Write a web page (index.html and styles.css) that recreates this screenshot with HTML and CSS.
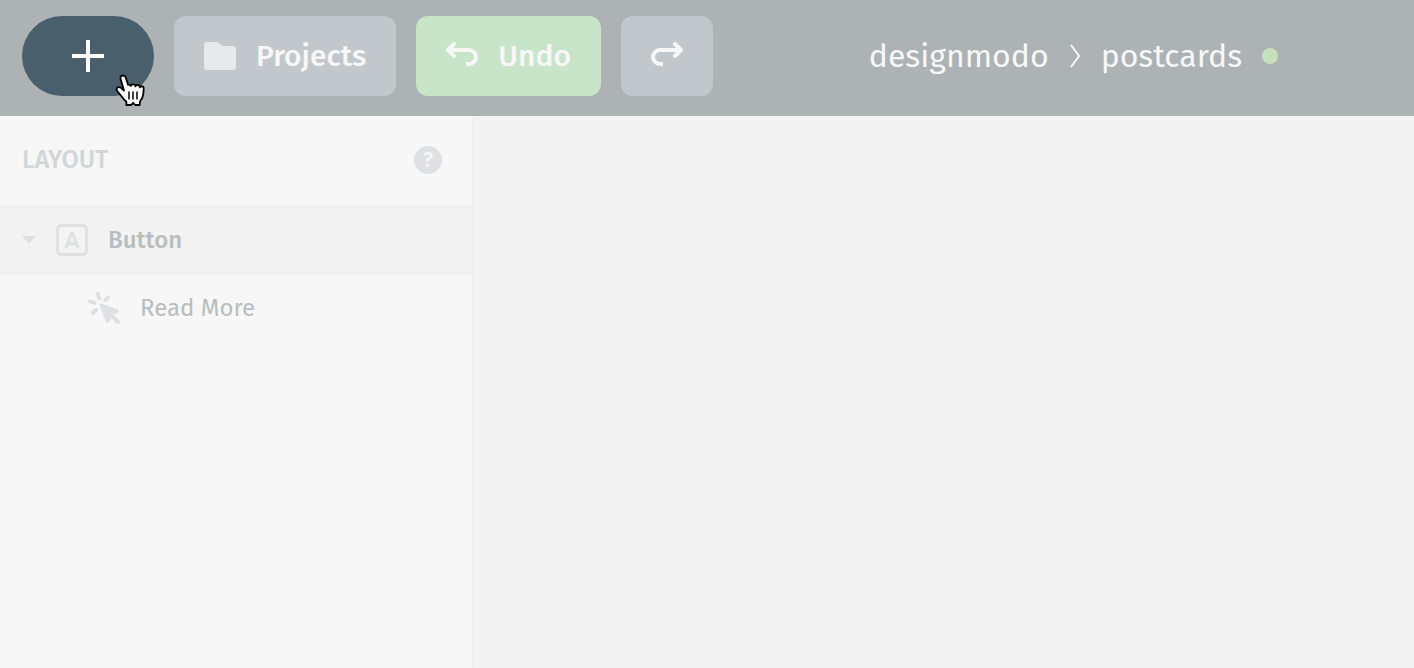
FILE: index.html
```html
<!DOCTYPE html>
<html lang="en">
  <head>
    <meta charset="UTF-8" />
    <meta name="viewport" content="width=device-width, initial-scale=1.0" />
    <title>designmodo - postcards</title>
    <link rel="stylesheet" href="styles.css">
  </head>
  <body>
    <header class="topbar">
      <button class="btn btn-add" type="button" aria-label="Add">
        <svg width="32" height="32" viewBox="0 0 32 32">
          <path d="M16 0v32M0 16h32" stroke="#fff" stroke-width="4" />
        </svg>
        <svg class="pointer" width="34" height="34" viewBox="0 0 34 34">
          <path d="M9 2.500c-1.800 0-3 1.500-2.500 3.300L10 17.500 7 14.800c-1.400-1-3.400-.8-4.200.5-.6 1-.2 2 .6 2.900l4.300 5.300c1.500 2.200 3 3.800 4.700 5.200V32h4.800l2-2.200 2 2.200h4.500l.3-3.500c2-2.500 3.200-5 3.400-8l.3-5.500c0-1.800-3-2.400-3.700-.7-.2-2.600-3.700-3.200-4.500-1-.4-2.200-4-2.600-4.800-.3-.4-1-1.700-1.500-2.700-1.200L11.700 4.500C11.300 3.200 10.300 2.500 9 2.500z" fill="#fff" stroke="#000" stroke-width="1.800" stroke-linejoin="round" />
          <path d="M15 18.500v8M19 18.500v8M23 18.500v8" stroke="#000" stroke-width="1.500" />
        </svg>
      </button>
      <button class="btn" type="button">
        <svg width="32" height="28" viewBox="0 0 32 28">
          <path d="M3 0h9c1.500 0 2.500.5 3.500 1.300L18 3.300c.6.500 1.200.7 2 .7h9a3 3 0 0 1 3 3v18a3 3 0 0 1-3 3H3a3 3 0 0 1-3-3V3a3 3 0 0 1 3-3z" fill="#e7e9eb" />
        </svg>
        Projects
      </button>
      <button class="btn btn-undo" type="button">
        <svg class="arrow" width="32" height="28" viewBox="0 0 32 28">
          <path d="M8 2 2 8l6 6" stroke-linecap="round" stroke-linejoin="round" />
          <path d="M2 8h21a7 7 0 0 1 0 14h-3" />
        </svg>
        Undo
      </button>
      <button class="btn" type="button" aria-label="Redo">
        <svg class="arrow" width="32" height="28" viewBox="0 0 32 28">
          <path d="m24 2 6 6-6 6" stroke-linecap="round" stroke-linejoin="round" />
          <path d="M30 8H9a7 7 0 0 0 0 14h3" />
        </svg>
      </button>
      <nav class="breadcrumb">
        <a href="#">designmodo</a>
        <svg width="12" height="24" viewBox="0 0 12 24">
          <path d="m2 1 8 11-8 11" fill="none" stroke="#f7f7f7" stroke-width="2" />
        </svg>
        <a href="#">postcards</a>
        <span class="status"></span>
      </nav>
    </header>

    <main class="workspace">
      <aside class="sidebar">
        <div class="sidebar-head">
          <h2>LAYOUT</h2>
          <button class="help" type="button">?</button>
        </div>
        <div class="layer layer-active">
          <svg width="14" height="8" viewBox="0 0 14 8">
            <path d="M0 0h14L7 8z" fill="#dfe0e4" />
          </svg>
          <svg width="32" height="32" viewBox="0 0 32 32" fill="none" stroke="#dfe0e4" stroke-width="3">
            <rect x="1.500" y="1.500" width="29" height="29" rx="4.500" />
            <path d="m10 24 5.200-14.500h1.600L22 24M11.500 19.500h9" />
          </svg>
          Button
        </div>
        <div class="layer layer-child">
          <svg width="32" height="32" viewBox="0 0 32 32" stroke="#dfe0e4" stroke-linecap="round" stroke-linejoin="round">
            <path d="m10 2 1.300 4.500M20 5.500l-2.500 2.500M2 9.500l4.500 1.200M8 18l-3 3" stroke-width="4" />
            <path d="m13 13 16.500 6-6.500 3.500L19.500 29.500z" fill="#dfe0e4" stroke-width="3" />
            <path d="m23 23 7 7" stroke-width="4" />
          </svg>
          Read More
        </div>
      </aside>
      <section class="canvas"></section>
    </main>
  </body>
</html>
```

FILE: styles.css
```css
* {
  box-sizing: border-box;
}
body {
  display: flex;
  flex-direction: column;
  min-height: 100vh;
  margin: 0;
  font-family: "Fira Sans", "Noto Sans", sans-serif;
  background-color: #f3f3f3;
}

/* Top bar */
.topbar {
  display: flex;
  gap: 20px;
  padding: 16px 0 20px 22px;
  background-color: #adb2b5;
}
.btn {
  position: relative;
  display: flex;
  align-items: center;
  gap: 20px;
  height: 80px;
  padding: 0 30px;
  border: none;
  border-radius: 12px;
  background-color: #c2c7cb;
  color: #f7f7f7;
  font-family: inherit;
  font-size: 30px;
  font-weight: 500;
  cursor: pointer;
}
.btn-add {
  padding: 0 50px;
  border-radius: 40px;
  background-color: #4a5f6c;
}
.btn-undo {
  background-color: #c8e5c9;
}
.arrow {
  fill: none;
  stroke: #f7f7f7;
  stroke-width: 4;
}
.pointer {
  position: absolute;
  right: 6px;
  bottom: -11px;
}
.breadcrumb {
  display: flex;
  flex: 1;
  align-items: center;
  justify-content: center;
  gap: 20px;
  font-size: 32px;
}
.breadcrumb a {
  color: #f7f7f7;
  text-decoration: none;
}
.status {
  width: 16px;
  height: 16px;
  border-radius: 50%;
  background-color: #c6e0bd;
}

/* Workspace */
.workspace {
  display: flex;
  flex: 1;
}
.sidebar {
  width: 474px;
  border-right: 2px solid #efefef;
  background-color: #f7f7f7;
}
.canvas {
  flex: 1;
}
.sidebar-head {
  display: flex;
  align-items: center;
  justify-content: space-between;
  height: 90px;
  padding: 0 30px 2px 22px;
}
.sidebar-head h2 {
  margin: 0;
  color: #d1d6d8;
  font-size: 25px;
  font-weight: 500;
}
.help {
  width: 28px;
  height: 28px;
  padding: 0;
  border: none;
  border-radius: 50%;
  background-color: #dfe0e4;
  color: #f7f7f7;
  font-family: inherit;
  font-size: 22px;
  font-weight: 500;
  line-height: 28px;
}
.layer {
  display: flex;
  align-items: center;
  gap: 20px;
  height: 68px;
  padding-left: 22px;
  color: #b9bdbf;
  font-size: 24px;
}
.layer-active {
  border-top: 2px solid #efefef;
  border-bottom: 2px solid #efefef;
  background-color: #f3f3f3;
  font-weight: 500;
}
.layer-child {
  padding-left: 88px;
}
```
